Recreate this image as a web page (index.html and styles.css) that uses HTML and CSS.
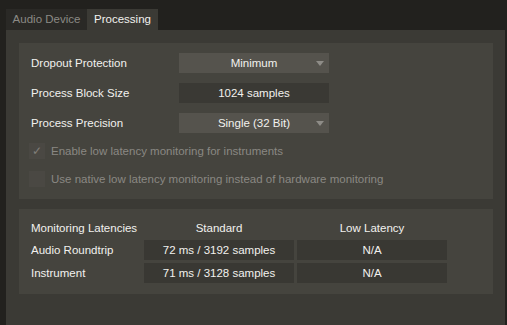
FILE: index.html
```html
<!DOCTYPE html>
<html lang="en">
<head>
    <meta charset="UTF-8">
    <title>Processing</title>
    <link rel="stylesheet" href="styles.css">
</head>
<body>
    <div class="tabs">
        <div class="tab">Audio Device</div>
        <div class="tab active">Processing</div>
    </div>

    <div class="panel">
        <!-- processing options -->
        <section class="group options">
            <div class="row">
                <span class="label">Dropout Protection</span>
                <div class="field combo">Minimum<span class="arrow"></span></div>
            </div>
            <div class="row">
                <span class="label">Process Block Size</span>
                <div class="field">1024 samples</div>
            </div>
            <div class="row">
                <span class="label">Process Precision</span>
                <div class="field combo">Single (32 Bit)<span class="arrow"></span></div>
            </div>
            <div class="check">
                <span class="box">&#10003;</span>
                <span>Enable low latency monitoring for instruments</span>
            </div>
            <div class="check">
                <span class="box"></span>
                <span>Use native low latency monitoring instead of hardware monitoring</span>
            </div>
        </section>

        <!-- latencies table -->
        <section class="group latencies">
            <div class="lat-row head">
                <span class="label">Monitoring Latencies</span>
                <span class="cell">Standard</span>
                <span class="cell">Low Latency</span>
            </div>
            <div class="lat-row">
                <span class="label">Audio Roundtrip</span>
                <span class="cell value">72 ms / 3192 samples</span>
                <span class="cell value">N/A</span>
            </div>
            <div class="lat-row">
                <span class="label">Instrument</span>
                <span class="cell value">71 ms / 3128 samples</span>
                <span class="cell value">N/A</span>
            </div>
        </section>
    </div>
</body>
</html>
```

FILE: styles.css
```css
body {
    margin: 0;
    padding: 9px 2px 0 6px;
    height: 316px;
    background-color: #22211e;
    font-family: 'Liberation Sans', Arial, sans-serif;
    font-size: 11.5px;
    color: #f2f1ee;
    display: flex;
    flex-direction: column;
    overflow: hidden;
}

.tabs {
    display: flex;
    height: 21px;
}

.tab {
    width: 81px;
    line-height: 21px;
    text-align: center;
    background-color: #2a2926;
    color: #8b8a85;
}

.tab.active {
    width: 71px;
    background-color: #3b3a35;
    color: #f2f1ee;
}

.panel {
    flex: 1;
    background-color: #3b3a35;
    padding: 13px 12px 0 13px;
}

.group {
    background-color: #45443e;
}

.options {
    height: 156px;
    padding: 10px 0 0 12px;
    box-sizing: border-box;
}

.row {
    display: flex;
    align-items: center;
    height: 20px;
    margin-bottom: 10px;
}

.row .label {
    width: 148px;
}

.field {
    position: relative;
    width: 150px;
    height: 20px;
    line-height: 20px;
    text-align: center;
    background-color: #3a3934;
}

.field.combo {
    background-color: #55534d;
}

.arrow {
    position: absolute;
    right: 5px;
    top: 8px;
    border-left: 4px solid transparent;
    border-right: 4px solid transparent;
    border-top: 5px solid #8e8c87;
}

.check {
    display: flex;
    align-items: center;
    height: 16px;
    margin: 0 0 12px -2px;
    color: #8a8883;
}

.check .box {
    width: 16px;
    height: 16px;
    margin-right: 6px;
    background-color: #4a4843;
    color: #807e79;
    font-size: 12px;
    line-height: 16px;
    text-align: center;
}

.latencies {
    margin-top: 10px;
    height: 85px;
    padding: 9px 0 0 12px;
    box-sizing: border-box;
}

.lat-row {
    display: flex;
    gap: 3px;
    height: 20px;
    line-height: 20px;
    margin-bottom: 3px;
}

.lat-row.head {
    margin-bottom: 2px;
}

.lat-row .label {
    width: 110px;
}

.cell {
    width: 150px;
    text-align: center;
}

.cell.value {
    background-color: #393833;
}
```
